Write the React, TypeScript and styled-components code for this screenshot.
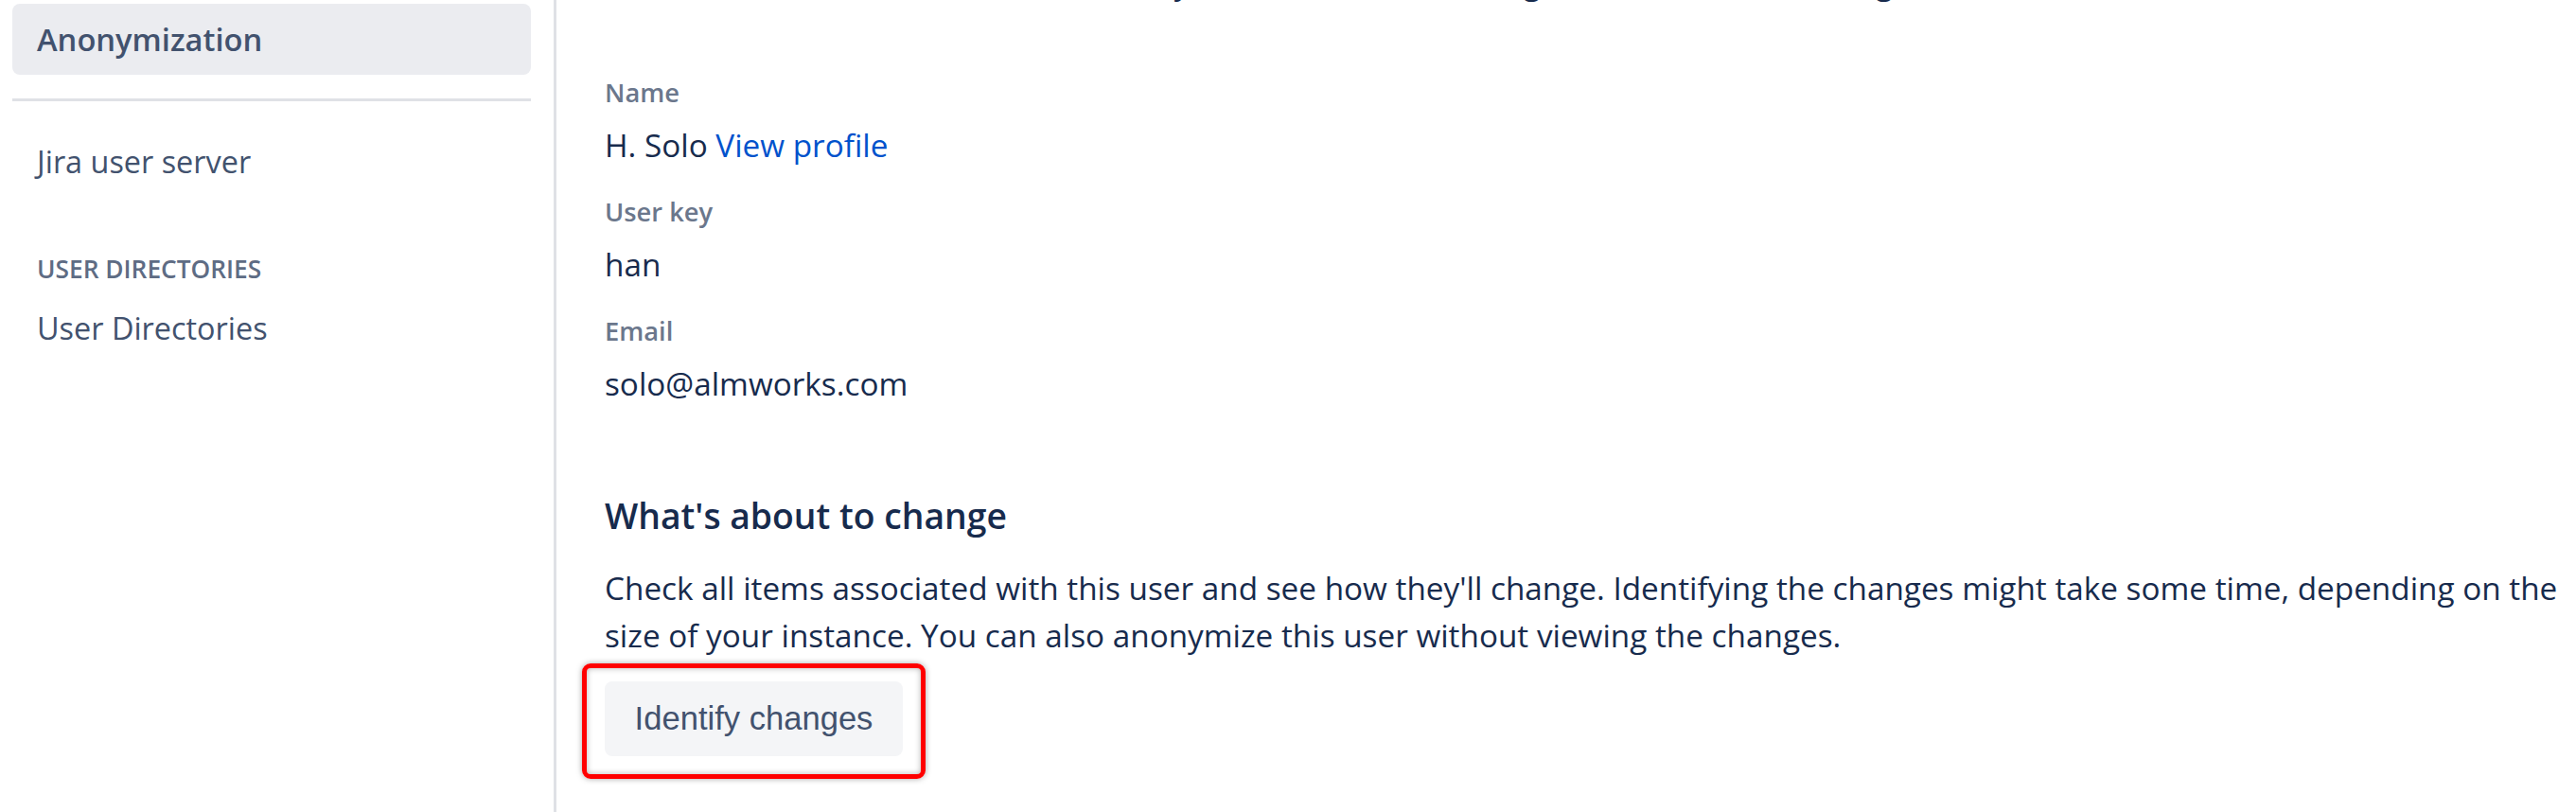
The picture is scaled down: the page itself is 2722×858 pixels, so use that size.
import React from "react";
import styled, { createGlobalStyle } from "styled-components";

const GlobalStyle = createGlobalStyle`
  html, body {
    margin: 0;
    padding: 0;
    background: #ffffff;
  }
  body {
    font-family: "Open Sans", "Noto Sans", sans-serif;
    color: #172b4d;
  }
`;

const FONT = `"Open Sans", "Noto Sans", sans-serif`;

const Page = styled.div`
  display: flex;
  width: 2722px;
  height: 858px;
  overflow: hidden;
`;

const Sidebar = styled.nav`
  width: 588px;
  flex-shrink: 0;
  border-right: 3px solid #dfe1e6;
  padding: 4px 24px 0 13px;
  box-sizing: border-box;
  font-family: ${FONT};
`;

const ActiveItem = styled.div`
  height: 75px;
  border-radius: 8px;
  background: #ebecf0;
  display: flex;
  align-items: center;
  padding-left: 26px;
  font-size: 32.7px;
  font-weight: 600;
  color: #42526e;
`;

const Divider = styled.hr`
  border: 0;
  height: 3px;
  background: #dfe1e6;
  margin: 25px 0 0;
`;

const NavItem = styled.div<{ $top: number }>`
  margin-top: ${(p) => p.$top}px;
  padding-left: 26px;
  font-size: 32.4px;
  line-height: 50px;
  color: #42526e;
`;

const GroupTitle = styled.div`
  margin-top: 69px;
  padding-left: 26px;
  font-size: 26.3px;
  line-height: 40px;
  font-weight: 600;
  color: #5e6c84;
`;

const Main = styled.main`
  flex: 1;
  padding: 0 10px 0 51px;
  font-family: ${FONT};
`;

// the line above is scrolled out of view, only its descenders show
const CutLine = styled.div`
  margin-top: -44px;
  height: 48px;
  font-size: 33.3px;
  line-height: 50px;
  color: #172b4d;
  white-space: nowrap;
  overflow: hidden;
`;

const FieldLabel = styled.div<{ $top: number }>`
  margin-top: ${(p) => p.$top}px;
  font-size: 27.3px;
  line-height: 40px;
  font-weight: 600;
  color: #6b778c;
`;

const FieldValue = styled.div`
  margin-top: 10px;
  font-size: 33.3px;
  line-height: 50px;
  color: #172b4d;
`;

const Link = styled.a`
  color: #0052cc;
  text-decoration: none;
`;

const Heading = styled.h3`
  margin: 90px 0 0;
  font-size: 37.3px;
  line-height: 50px;
  font-weight: 600;
  color: #172b4d;
`;

const Paragraph = styled.p`
  margin: 26px 0 0;
  font-size: 33.3px;
  line-height: 50px;
  color: #172b4d;
`;

const ButtonSlot = styled.div`
  position: relative;
  width: fit-content;
  margin-top: 24px;
`;

const Button = styled.button`
  display: block;
  height: 79px;
  width: 315px;
  border: 0;
  border-radius: 8px;
  background: #f4f5f7;
  color: #42526e;
  font-family: "Liberation Sans", Arial, sans-serif;
  font-size: 34.6px;
  padding: 0;
`;

const Highlight = styled.span`
  position: absolute;
  top: -19px;
  left: -24px;
  right: -24px;
  bottom: -24px;
  border: 5px solid #ff0000;
  border-radius: 9px;
  box-shadow: 0 0 6px rgba(0, 0, 0, 0.35), inset 0 0 6px rgba(0, 0, 0, 0.3);
  pointer-events: none;
`;

export default function App() {
  return (
    <>
      <GlobalStyle />
      <Page>
        <Sidebar>
          <ActiveItem>Anonymization</ActiveItem>
          <Divider />
          <NavItem $top={38}>Jira user server</NavItem>
          <GroupTitle>USER DIRECTORIES</GroupTitle>
          <NavItem $top={17}>User Directories</NavItem>
        </Sidebar>
        <Main>
          <CutLine>
            The details listed below will all be anonymized and then the original values will be changed.
          </CutLine>
          <FieldLabel $top={74}>Name</FieldLabel>
          <FieldValue>
            H. Solo <Link href="#">View profile</Link>
          </FieldValue>
          <FieldLabel $top={26}>User key</FieldLabel>
          <FieldValue>han</FieldValue>
          <FieldLabel $top={26}>Email</FieldLabel>
          <FieldValue>solo@almworks.com</FieldValue>
          <Heading>What's about to change</Heading>
          <Paragraph>
            Check all items associated with this user and see how they'll change. Identifying the changes might take
            some time, depending on the size of your instance. You can also anonymize this user without viewing the
            changes.
          </Paragraph>
          <ButtonSlot>
            <Button>Identify changes</Button>
            <Highlight />
          </ButtonSlot>
        </Main>
      </Page>
    </>
  );
}
